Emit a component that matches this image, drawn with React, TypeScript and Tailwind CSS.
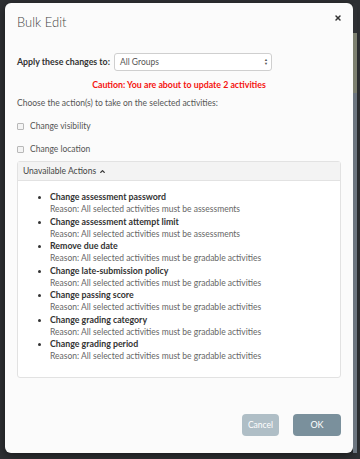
import { ChevronUp, X } from 'lucide-react'

const unavailable = [
  { name: 'Change assessment password', reason: 'All selected activities must be assessments' },
  { name: 'Change assessment attempt limit', reason: 'All selected activities must be assessments' },
  { name: 'Remove due date', reason: 'All selected activities must be gradable activities' },
  { name: 'Change late-submission policy', reason: 'All selected activities must be gradable activities' },
  { name: 'Change passing score', reason: 'All selected activities must be gradable activities' },
  { name: 'Change grading category', reason: 'All selected activities must be gradable activities' },
  { name: 'Change grading period', reason: 'All selected activities must be gradable activities' },
]

function CheckRow({ label }: { label: string }) {
  return (
    <label className="flex h-[12px] items-center gap-[6px] text-[8.5px] leading-[12px] text-[#555]">
      <span className="block h-[7px] w-[7px] rounded-[1px] border border-[#b8b8b8] bg-[#f4f4f4]" />
      {label}
    </label>
  )
}

export default function App() {
  return (
    <div
      className="flex h-[459px] w-[360px] overflow-hidden bg-[#2e3033] pt-[3px] pb-[6px] pl-[5px]"
      style={{ fontFamily: 'Lato, "Open Sans", sans-serif' }}
    >
      <div className="flex w-[348px] flex-col rounded-[6px] bg-[#fbfbfb] px-[12px] shadow-[0_2px_8px_rgba(0,0,0,0.5)]">
        <div className="flex items-start justify-between pt-[11px]">
          <h1 className="text-[13px] leading-[16px] font-light text-[#444]">Bulk Edit</h1>
          <X className="mt-[0px] -mr-[1px] h-[8px] w-[8px] text-[#333]" strokeWidth={4.5} />
        </div>

        <div className="mt-[23px] flex items-center gap-[4px]">
          <span className="text-[8.8px] font-bold text-[#333]">Apply these changes to:</span>
          <div className="flex h-[18px] w-[158px] items-center justify-between rounded-[3px] border border-[#cfcfcf] bg-white pr-[3px] pl-[5px] text-[8.5px] text-[#555]">
            <span>All Groups</span>
            <span className="flex flex-col items-center text-[4px] leading-[4px] text-[#555]">
              <span>▲</span>
              <span>▼</span>
            </span>
          </div>
        </div>

        <p className="mt-[8px] text-center text-[8.8px] leading-[12px] font-bold text-[#f5130f]">
          Caution: You are about to update 2 activities
        </p>

        <p className="mt-[6px] text-[8.5px] leading-[12px] text-[#555]">
          Choose the action(s) to take on the selected activities:
        </p>

        <div className="mt-[11px] flex flex-col gap-[11px]">
          <CheckRow label="Change visibility" />
          <CheckRow label="Change location" />
        </div>

        <div className="mt-[6px] rounded-[3px] border border-[#e2e2e2] bg-white">
          <div className="flex h-[19px] items-center gap-[3px] border-b border-[#e2e2e2] bg-[#f3f3f3] px-[5px] text-[8.5px] text-[#444]">
            Unavailable Actions
            <ChevronUp className="h-[7px] w-[7px] text-[#333]" strokeWidth={4.5} />
          </div>
          <ul className="list-disc pt-[10px] pr-[6px] pb-[14px] pl-[32px] marker:text-[#333]">
            {unavailable.map((item) => (
              <li key={item.name} className="mb-[0.5px] text-[8.5px] leading-[12px]">
                <div className="text-[8.8px] font-bold text-[#333]">{item.name}</div>
                <div className="text-[#666]">Reason: {item.reason}</div>
              </li>
            ))}
          </ul>
        </div>

        <div className="mt-auto mb-[17px] flex justify-end gap-[14px]">
          <button className="h-[22px] w-[37px] rounded-[4px] bg-[#afbec6] text-[8.5px] text-white" type="button">
            Cancel
          </button>
          <button className="h-[22px] w-[48px] rounded-[4px] bg-[#7a909c] text-[9px] text-white" type="button">
            OK
          </button>
        </div>
      </div>
      <div className="flex h-full w-[4px] flex-col">
        <div className="h-[30px] bg-[#2e3033]" />
        <div className="h-[60px] bg-[#7d8070]" />
        <div className="flex-1 bg-[#6d7680]" />
      </div>
    </div>
  )
}
